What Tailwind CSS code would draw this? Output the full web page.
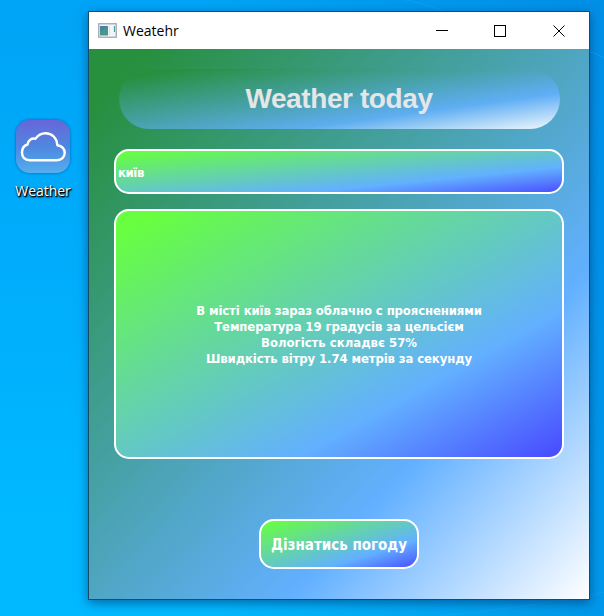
<!DOCTYPE html>
<html lang="uk">
<head>
<meta charset="utf-8">
<title>Weather</title>
<script src="https://cdn.jsdelivr.net/npm/@tailwindcss/browser@4"></script>
</head>
<body class="w-[604px] h-[616px] overflow-hidden">
<main class="relative flex w-[604px] h-[616px] overflow-hidden bg-[linear-gradient(to_right,transparent_35%,#0081dc99_100%),linear-gradient(to_bottom,#00a4f6,#00adfc_45%,#00b8ff_80%,#00b9ff)]">
  <svg class="absolute inset-0" width="604" height="616" viewBox="0 0 604 616" fill="none" stroke="#3cb8ff" aria-hidden="true">
    <path d="M395 -2Q425 3 445 12" stroke-opacity=".2"/>
    <path d="M588 51Q596 53 606 59" stroke-opacity=".35"/>
    <path d="M440 616Q530 607 606 592" stroke-opacity=".2"/>
  </svg>
  <aside class="relative w-[88px] shrink-0 pt-[120px] flex flex-col items-center">
    <div class="w-[54px] h-[53px] mr-[2px] rounded-[14px] bg-linear-to-b from-[#6665da] via-[#4d87df] to-[#55aeed] shadow-[0_0_3px_#0046a0cc]">
      <svg width="54" height="54" viewBox="0 0 54 54" fill="none" stroke="#fff" stroke-width="2.4" stroke-linejoin="round">
        <path d="M13.500 40.200C8.500 40.200 6 37 6 32.500C6 28.300 8.500 25.400 11.500 24.500C12 20 15.500 18 19.500 18.700C22 15 25.500 13.200 29.500 13.200C36 13.200 41 18 41.300 25.200C45.800 26 48.700 29 48.700 33C48.700 37.200 45.500 40.200 41 40.200Z"/>
      </svg>
    </div>
    <div class="mt-[8px] mr-[2px] h-[20px] leading-[20px] font-['Open_Sans','Noto_Sans',sans-serif] text-[14px] tracking-[-0.05px] text-white [text-shadow:1px_1px_2px_#000,1px_1px_1px_#000,0_1px_2px_#000a]">Weather</div>
  </aside>
  <section class="relative mt-[11px] w-[502px] h-[589px] shrink-0 border border-[#174b68] shadow-[0_3px_10px_#00346a99] flex flex-col">
    <header class="h-[37px] shrink-0 bg-white flex items-center pl-[9px]">
      <svg width="19" height="15" viewBox="0 0 19 15" class="shrink-0">
        <rect x=".75" y=".75" width="17.500" height="13.500" fill="#f2f5f7" stroke="#a2a8b4" stroke-width="1.300"/>
        <rect x="2" y="3" width="8" height="9.500" fill="#49958f"/>
        <path d="M2 3h8L2 9z" fill="#4783a0"/>
        <path d="M11.500 3v9" stroke="#dce1e5"/>
        <path d="M16.500 3v6" stroke="#4e9e9d" stroke-width="1.200"/>
      </svg>
      <span class="ml-[6px] font-['Open_Sans','Noto_Sans',sans-serif] text-[14px] leading-[20px] text-black">Weatehr</span>
      <svg class="ml-auto mr-[23px] shrink-0" width="130" height="12" viewBox="0 0 130 12" fill="none" stroke="#000" shape-rendering="crispEdges">
        <path d="M0 5.500h12"/>
        <rect x="58.500" y=".5" width="11" height="11"/>
        <path d="M117.500 .5l11 11M128.500 .5l-11 11" shape-rendering="auto"/>
      </svg>
    </header>
    <div class="flex-1 flex flex-col items-center bg-[linear-gradient(to_bottom_right,#26903f_6%,#62b0ff_70%,#fff_100%)] text-white font-['DejaVu_Sans_Condensed','DejaVu_Sans',sans-serif] font-bold">
      <h1 class="mt-[20px] w-[441px] h-[60px] shrink-0 rounded-[30px] flex items-center justify-center bg-[linear-gradient(to_bottom_right,#26903fd9_8%,#62b0ffd9_70%,#ffffffeb_100%)] font-['Liberation_Sans',sans-serif] text-[28px] tracking-[-0.4px] text-[#e6e6e6]"><span>Weather today</span></h1>
      <input type="text" value="київ" class="mt-[20px] w-[450px] h-[45px] shrink-0 rounded-[15px] border-2 border-white pl-[2px] pt-[2px] text-[13px] tracking-[-0.4px] font-bold bg-[linear-gradient(to_bottom_right,#67ff3f_5%,#62b0ff_70%,#4747ff_100%)] bg-origin-border outline-none">
      <div class="mt-[15px] w-[450px] h-[250px] shrink-0 rounded-[15px] border-2 border-white pt-[2px] flex flex-col items-center justify-center bg-[linear-gradient(to_bottom_right,#67ff3f_5%,#62b0ff_70%,#4747ff_100%)] bg-origin-border text-[13px] leading-[16px] tracking-[-0.11px] whitespace-nowrap">
        <p>В місті київ зараз облачно с прояснениями</p>
        <p>Температура 19 градусів за цельсієм</p>
        <p class="tracking-normal">Вологість складвє 57%</p>
        <p>Швидкість вітру 1.74 метрів за секунду</p>
      </div>
      <button type="button" class="mt-[60px] w-[160px] h-[50px] shrink-0 rounded-[15px] border-2 border-white pt-[2px] bg-[linear-gradient(to_bottom_right,#67ff3f_5%,#62b0ff_70%,#4747ff_100%)] bg-origin-border text-[15px] whitespace-nowrap">Дізнатись погоду</button>
    </div>
  </section>
</main>
</body>
</html>
